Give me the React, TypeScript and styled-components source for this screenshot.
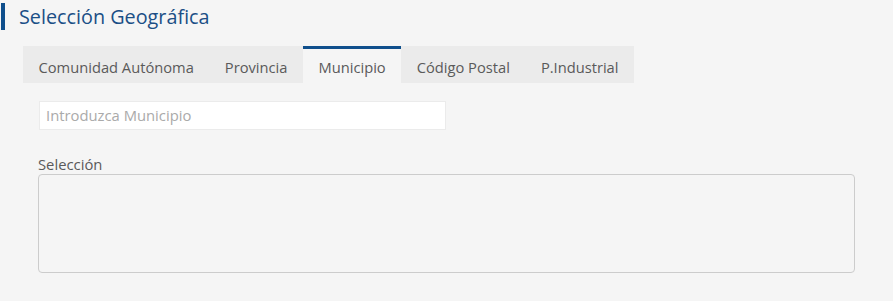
import React, { useState } from "react";
import styled, { createGlobalStyle } from "styled-components";

const GlobalStyle = createGlobalStyle`
  html, body {
    margin: 0;
    padding: 0;
    background: #f5f5f5;
  }
  body {
    font-family: "Open Sans", "Noto Sans", sans-serif;
    color: #555;
  }
`;

const Page = styled.div`
  width: 893px;
  height: 301px;
  background: #f5f5f5;
  box-sizing: border-box;
  padding-top: 3px;
`;

const Header = styled.div`
  display: flex;
  align-items: center;
  height: 27px;
  border-left: 4px solid #0f4f8c;
  padding-left: 14px;
  margin-left: 1px;
`;

const Title = styled.h2`
  margin: 0;
  font-size: 19.8px;
  font-weight: 400;
  color: #1b4f86;
  line-height: 27px;
`;

const Panel = styled.div`
  margin: 16px 38px 0 23px;
`;

const TabList = styled.div`
  display: inline-flex;
  background: #ebebeb;
  height: 37px;
`;

const Tab = styled.button<{ $active?: boolean }>`
  font-family: inherit;
  font-size: 14.7px;
  color: #5a5a5a;
  border: 0;
  border-top: 3px solid ${(p) => (p.$active ? "#0f4f8c" : "transparent")};
  background: ${(p) => (p.$active ? "#f5f5f5" : "transparent")};
  padding: 0 15.5px;
  height: 37px;
  line-height: 36px;
  cursor: pointer;
`;

const TabBody = styled.div`
  padding: 18px 0 0 15px;
  display: flex;
  flex-direction: column;
`;

const SearchInput = styled.input`
  width: 407px;
  height: 29px;
  box-sizing: border-box;
  border: 1px solid #ebebeb;
  background: #fff;
  font-family: inherit;
  font-size: 14.8px;
  color: #555;
  padding: 0 6px 2px;
  outline: none;
  margin-left: 1px;

  &::placeholder {
    color: #aaa;
  }
`;

const Label = styled.label`
  font-size: 14.8px;
  color: #5a5a5a;
  margin-top: 24px;
  line-height: 20px;
`;

const SelectionBox = styled.div`
  height: 99px;
  box-sizing: border-box;
  border: 1px solid #cccccc;
  border-radius: 4px;
  background: #f5f5f5;
`;

const tabs = [
  "Comunidad Autónoma",
  "Provincia",
  "Municipio",
  "Código Postal",
  "P.Industrial",
];

export default function App() {
  const [active, setActive] = useState(2);
  const name = tabs[active];

  return (
    <>
      <GlobalStyle />
      <Page>
        <Header>
          <Title>Selección Geográfica</Title>
        </Header>
        <Panel>
          <TabList>
            {tabs.map((t, i) => (
              <Tab key={t} $active={i === active} onClick={() => setActive(i)}>
                {t}
              </Tab>
            ))}
          </TabList>
          <TabBody>
            <SearchInput placeholder={`Introduzca ${name}`} />
            <Label>Selección</Label>
            <SelectionBox />
          </TabBody>
        </Panel>
      </Page>
    </>
  );
}
